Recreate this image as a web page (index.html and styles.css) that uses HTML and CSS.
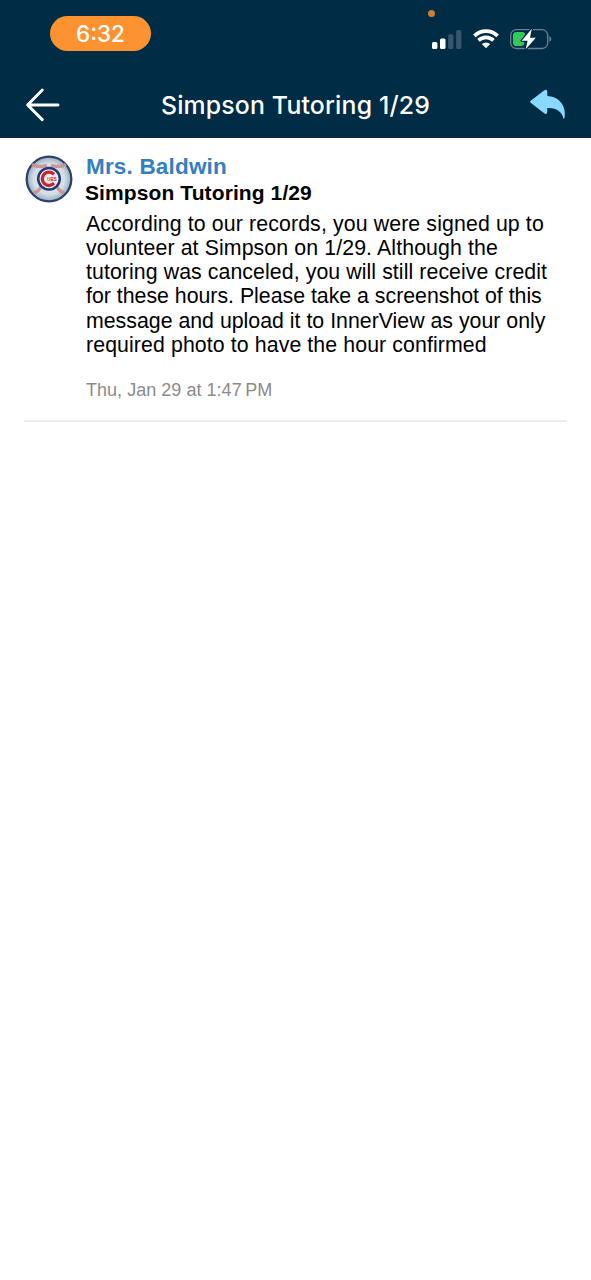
FILE: index.html
```html
<!DOCTYPE html>
<html lang="en">
<head>
<meta charset="utf-8">
<title>Simpson Tutoring 1/29</title>
<link rel="stylesheet" href="styles.css">
</head>
<body>
<header class="top">
  <div class="status">
    <div class="time">6:32</div>
    <div class="indicators">
      <span class="mic-dot"></span>
      <svg class="signal" width="30" height="20" viewBox="0 0 30 20">
        <rect x="0" y="12" width="5.400" height="7" rx="1.5" fill="#fff"/>
        <rect x="8" y="8.5" width="5.500" height="10.5" rx="1.5" fill="#fff"/>
        <rect x="16.2" y="4.2" width="5.2" height="14.8" rx="1.5" fill="#36566b"/>
        <rect x="24.2" y="0" width="5.2" height="19" rx="1.5" fill="#36566b"/>
      </svg>
      <svg class="wifi" width="26" height="20" viewBox="0 0 26 20">
        <g fill="none" stroke="#fff" stroke-width="3.7">
          <path d="M1.4 6.900a16.5 16.5 0 0 1 23.2 0"/>
          <path d="M5.5 11.4a10.8 10.8 0 0 1 15 0"/>
        </g>
        <path d="M13 19.300 8.800 15.100a6.1 6.1 0 0 1 8.4 0z" fill="#fff"/>
      </svg>
      <svg class="battery" width="42" height="22" viewBox="0 0 42 22">
        <rect x=".7" y="1.7" width="37" height="18.8" rx="5.6" fill="none" stroke="#6b8090" stroke-width="1.3"/>
        <path d="M39.3 8.1q2 1 2 3t-2 3z" fill="#6b8090"/>
        <path d="M6.500 4H13Q16 4.500 14.500 8L11.500 13Q15 14 14.300 16 13.700 18 11.500 18H6.500a3.600 3.600 0 0 1-3.600-3.600V7.600A3.600 3.600 0 0 1 6.500 4z" fill="#34c759"/>
        <path d="M21.800.7 11.700 12.700H17.600L15.700 21.300 25.800 9.800H20z" fill="#fff" stroke="#002c45" stroke-width="2.400" stroke-linejoin="round" paint-order="stroke"/>
      </svg>
    </div>
  </div>
  <nav class="nav">
    <svg class="back" width="36" height="36" viewBox="0 0 36 36" fill="none" stroke="#fff" stroke-width="2.900" stroke-linecap="round" stroke-linejoin="round">
      <path d="M17.300 3 2.600 18 17.300 32.600M2.600 18H33"/>
    </svg>
    <h1 class="title">Simpson Tutoring 1/29</h1>
    <svg class="reply" width="36" height="32" viewBox="0 0 36 32">
      <path d="M1 11.500 14 1.400Q17.200-.6 17.300 3V6.900C28 7.300 35.500 15 34.800 26 34.700 30.600 33.400 31 32.800 27.500 30.500 21.500 25.500 18.600 17.300 18.900V22.500Q17 26.500 13.800 24.100L1 14.100Q-.7 12.700 1 11.500z" fill="#87d9ff"/>
    </svg>
  </nav>
</header>
<main class="message">
  <svg class="avatar" width="48" height="48" viewBox="0 0 48 48">
    <defs>
      <radialGradient id="ball"><stop offset="0" stop-color="#edf3f6"/><stop offset=".7" stop-color="#d3dee5"/><stop offset="1" stop-color="#98abb9"/></radialGradient>
    </defs>
    <circle cx="24" cy="24" r="22.300" fill="url(#ball)" stroke="#2b4273" stroke-width="2.300"/>
    <g fill="none" stroke="#cf8a8b" stroke-width="3.400" stroke-dasharray="1.800 .3">
      <path d="M7 9.500Q14 13 22 10.300M41 9.500Q34 13 26 10.300M9 38Q14 36 16 31.500M39 38Q34 36 32 31.500"/>
    </g>
    <circle cx="24" cy="23.800" r="10.800" fill="#f5eeee" stroke="#1d3a79" stroke-width="2.500"/>
    <path d="M29 19.400A6.700 6.700 0 1 0 29 28.200" fill="none" stroke="#c9252f" stroke-width="3.300"/>
    <text class="logo-text" x="22.300" y="25.500">UBS</text>
  </svg>
  <div class="content">
    <div class="sender">Mrs. Baldwin</div>
    <div class="subject">Simpson Tutoring 1/29</div>
    <p class="body">
      <span class="l1">According to our records, you were signed up to</span>
      <span class="l2">volunteer at Simpson on 1/29. Although the</span>
      <span class="l3">tutoring was canceled, you will still receive credit</span>
      <span class="l4">for these hours. Please take a screenshot of this</span>
      <span class="l5">message and upload it to InnerView as your only</span>
      <span class="l6">required photo to have the hour confirmed</span>
    </p>
    <div class="date">Thu, Jan 29 at 1:47&#8201;PM</div>
  </div>
</main>
</body>
</html>
```
FILE: styles.css
```css
* { box-sizing: border-box; }
body { margin: 0; min-height: 1280px; background: #fff; font-family: "Liberation Sans", Arial, sans-serif; color: #000; }
.top { height: 138px; background: #002c45; color: #fff; font-family: Inter, sans-serif; }
.status { height: 72px; display: flex; justify-content: space-between; align-items: flex-start; padding: 16px 39px 0 50px; }
.time { width: 101px; height: 35px; border-radius: 18px; background: #fd9330; font-size: 22.500px; line-height: 36px; text-align: center; letter-spacing: 0; font-weight: 450; }
.indicators { position: relative; display: flex; align-items: flex-start; padding-top: 13px; }
.mic-dot { position: absolute; left: -4px; top: -6px; width: 7px; height: 7px; border-radius: 50%; background: #cf7d31; }
.signal { margin-top: 1px; }
.wifi { margin: 0 0 0 11px; }
.battery { margin: -1px 0 0 11px; }
.nav { height: 66px; display: flex; justify-content: space-between; align-items: flex-start; padding: 15px 25px 0 25px; }
.back { display: block; }
.title { margin: 0; font-size: 24.800px; line-height: 36px; font-weight: 500; letter-spacing: .18px; white-space: nowrap; }
.reply { display: block; margin-top: 2px; }
.message { display: flex; margin: 0 24px; height: 284px; border-bottom: 2px solid #ececec; padding-top: 16px; }
.avatar { flex: none; margin: 1px 0 0 1px; }
.logo-text { font: bold 4.500px "Liberation Sans", sans-serif; fill: #c9252f; }
.content { padding-left: 13px; white-space: nowrap; }
.sender { font-size: 22.500px; line-height: 26px; font-weight: 700; letter-spacing: .18px; color: #347fc1; }
.subject { font-size: 21px; line-height: 25px; font-weight: 700; letter-spacing: .1px; margin-left: -1px; }
.body { margin: 6.500px 0 0; font-size: 21.300px; line-height: 24.250px; }
.body span { display: block; width: max-content; }
.l1 { letter-spacing: .12px; }
.l2 { letter-spacing: .11px; }
.l3 { letter-spacing: .08px; }
.l4 { letter-spacing: 0; }
.l5 { letter-spacing: .01px; }
.l6 { letter-spacing: .10px; }
.date { margin-top: 20.500px; font-size: 18px; line-height: 24px; color: #8b8b8b; letter-spacing: .03px; }
```
